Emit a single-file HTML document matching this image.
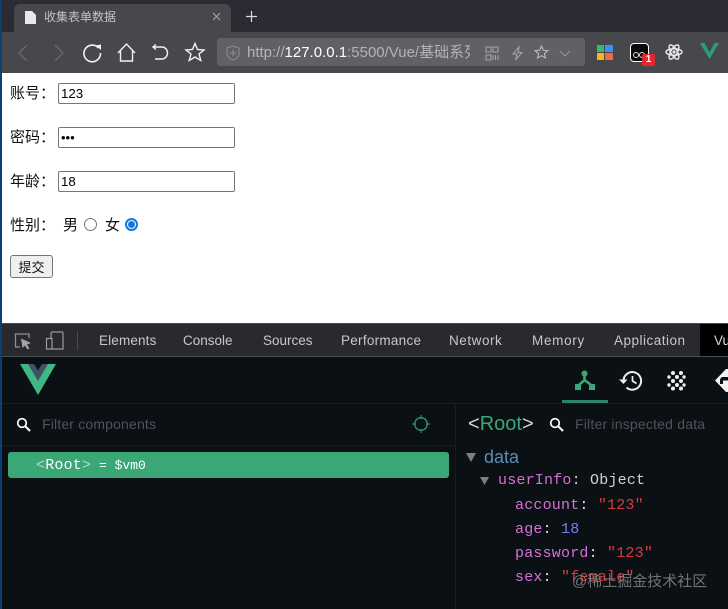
<!DOCTYPE html>
<html><head><meta charset="utf-8"><style>
html,body{margin:0;padding:0;width:728px;height:609px;overflow:hidden;background:#fff}
body{position:relative;font-family:"Liberation Sans","Noto Sans CJK SC",sans-serif}
.a{position:absolute;white-space:nowrap}
.cn{font-size:15px;color:#111;line-height:20px}
.inp{position:absolute;left:58px;width:175px;height:19px;border:1px solid #767676;border-radius:2px;background:#fff;font-size:13.3px;line-height:19px;color:#000;text-indent:2px}
.tab{position:absolute;top:332px;font-size:13.5px;line-height:18px;color:#c6c8cb;white-space:nowrap}
.m{position:absolute;white-space:nowrap;font-family:"Liberation Mono",monospace;font-size:15px;line-height:20px;letter-spacing:.2px}
.k{color:#d670d6}.s{color:#d93a3a}
svg{position:absolute;overflow:visible}
</style></head><body>
<div class="a" style="left:0;top:0;width:728px;height:32px;background:#2a2b33"></div>
<div class="a" style="left:14px;top:4px;width:217px;height:28px;background:#47484c;border-radius:6px 6px 0 0"></div>
<div class="a" style="left:0;top:32px;width:728px;height:41px;background:#47484c"></div>
<div class="a" style="left:0;top:0;width:2px;height:609px;background:#0d3f70"></div>
<svg style="left:25px;top:11px" width="12" height="13"><path d="M0 0H7L11 4V13H0Z" fill="#e8e8e8"/></svg>
<div class="a" style="left:44px;top:9px;font-size:12px;line-height:17px;color:#c4c4c6">收集表单数据</div>
<svg style="left:212px;top:12px" width="9" height="9"><path d="M1 1L8 8M8 1L1 8" stroke="#aaa" fill="none"/></svg>
<svg style="left:245px;top:10px" width="13" height="13"><path d="M6.5 1V12M1 6.5H12" stroke="#ddd" fill="none" stroke-width="1.2"/></svg>
<svg style="left:18px;top:44px" width="10" height="18"><path d="M9 1L1 9L9 17" stroke="#6e6f73" fill="none" stroke-width="1.2"/></svg>
<svg style="left:54px;top:44px" width="10" height="18"><path d="M1 1L9 9L1 17" stroke="#6e6f73" fill="none" stroke-width="1.2"/></svg>
<svg style="left:82px;top:42px" width="20" height="21"><path d="M16.5 6A8.3 8.3 0 1 0 18.5 11" stroke="#f2f2f2" fill="none" stroke-width="1.6"/><path d="M13.5 3.5L19 2.500V8Z" fill="#f2f2f2"/></svg>
<svg style="left:117px;top:43px" width="19" height="19"><path d="M1 10L9.500 1L18 10M3.500 8V18H15.500V8" stroke="#f2f2f2" fill="none" stroke-width="1.4"/></svg>
<svg style="left:152px;top:44px" width="18" height="17"><path d="M4 .5L1 3L4 5.500M1.500 3H10A5.500 6 0 0 1 10 15H3" stroke="#f2f2f2" fill="none" stroke-width="1.400"/></svg>
<svg style="left:185px;top:42px" width="20" height="20"><path d="M10 1.500L12.500 7.500L19 8L14 12L15.800 18.500L10 15L4.200 18.500L6 12L1 8L7.500 7.500Z" stroke="#f2f2f2" fill="none" stroke-width="1.4"/></svg>
<div class="a" style="left:217px;top:38px;width:368px;height:28px;background:#606164;border-radius:3px"></div>
<svg style="left:226px;top:45px" width="14" height="16"><path d="M7 1L13 3V8C13 12 10 14 7 15C4 14 1 12 1 8V3ZM7 5V11M4 8H10" stroke="#8d8e90" fill="none"/></svg>
<div class="a" style="left:247px;top:42px;width:223px;overflow:hidden;font-size:15px;line-height:21px;color:#b3b4b6">http://<span style="color:#fff">127.0.0.1</span>:5500/Vue/基础系列</div>
<svg style="left:485px;top:46px" width="14" height="15"><path d="M1 1H6V6H1ZM8 1H13V6H8ZM1 9H6V14H1ZM8 9V14M10.500 9V14M13 9V14" stroke="#a6a7a9" fill="none"/></svg>
<svg style="left:511px;top:46px" width="13" height="15"><path d="M8 1L2 8H6L4.500 14L11 6.500H7Z" stroke="#a6a7a9" fill="none"/></svg>
<svg style="left:534px;top:45px" width="15" height="14"><path d="M7.500 1L9.300 5.200L14 5.600L10.400 8.600L11.500 13L7.500 10.700L3.500 13L4.600 8.600L1 5.600L5.700 5.200Z" stroke="#c4c4c5" fill="none"/></svg>
<svg style="left:559px;top:50px" width="12" height="7"><path d="M1 1L6 6L11 1" stroke="#9a9b9d" fill="none"/></svg>
<div class="a" style="left:597px;top:45px;width:7px;height:7px;background:#36b96e"></div>
<div class="a" style="left:605px;top:45px;width:8px;height:7px;background:#3d8ff0"></div>
<div class="a" style="left:597px;top:53px;width:7px;height:7px;background:#f7b51f"></div>
<div class="a" style="left:605px;top:53px;width:8px;height:7px;background:#ee6a43"></div>
<div class="a" style="left:630px;top:43px;width:17px;height:17px;background:#0a0a0a;border:1px solid #fff;border-radius:4px"></div>
<div class="a" style="left:633px;top:52px;width:4px;height:4px;border:1px solid #ddd;border-radius:50%"></div>
<div class="a" style="left:639px;top:52px;width:4px;height:4px;border:1px solid #ddd;border-radius:50%"></div>
<div class="a" style="left:642px;top:54px;width:13px;height:12px;background:#e8262f;border-radius:2px;color:#fff;font-size:10px;font-weight:bold;line-height:12px;text-align:center">1</div>
<svg style="left:665px;top:43px" width="18" height="18" viewBox="0 0 18 18"><g fill="none" stroke="#e6e6e6" stroke-width="1.500"><ellipse cx="9" cy="9" rx="8" ry="3.200"/><ellipse cx="9" cy="9" rx="8" ry="3.200" transform="rotate(60 9 9)"/><ellipse cx="9" cy="9" rx="8" ry="3.200" transform="rotate(120 9 9)"/></g><circle cx="9" cy="9" r="1.600" fill="#e6e6e6"/></svg>
<svg style="left:700px;top:43px" width="19" height="16"><path d="M0 0H4.500L9.500 9.500L14.500 0H19L9.500 16Z" fill="#2e9d7e"/></svg>

<div class="a cn" style="left:10px;top:84px">账号：</div>
<div class="inp" style="top:83px">123</div>
<div class="a cn" style="left:10px;top:128px">密码：</div>
<div class="inp" style="top:127px;font-size:13px;letter-spacing:0">•••</div>
<div class="a cn" style="left:10px;top:172px">年龄：</div>
<div class="inp" style="top:171px">18</div>
<div class="a cn" style="left:10px;top:216px">性别：</div>
<div class="a cn" style="left:63px;top:216px">男</div>
<div class="a" style="left:84px;top:218px;width:11px;height:11px;border:1px solid #767676;border-radius:50%;background:#fff"></div>
<div class="a cn" style="left:105px;top:216px">女</div>
<div class="a" style="left:125px;top:218px;width:9px;height:9px;border:2px solid #0f7ae5;border-radius:50%;background:#fff"></div>
<div class="a" style="left:128px;top:221px;width:7px;height:7px;border-radius:50%;background:#0f7ae5"></div>
<div class="a" style="left:10px;top:255px;width:41px;height:21px;border:1px solid #767676;border-radius:3px;background:#efefef;font-size:13px;line-height:24px;text-align:center;color:#111">提交</div>

<div class="a" style="left:2px;top:323px;width:726px;height:34px;background:#292a2d;border-top:1px solid #494c50;box-sizing:border-box"></div>
<div class="a" style="left:2px;top:356px;width:726px;height:1px;background:#494c50"></div>
<svg style="left:14px;top:332px" width="18" height="18"><path d="M6 15H1.500V2H15V6" stroke="#8f9092" fill="none" stroke-width="1.300"/><path d="M7 6.500L17 11L13 12.500L15.500 16.500L13.500 17.500L11 13.500L8.500 16Z" fill="#a3a4a6"/></svg>
<svg style="left:45px;top:331px" width="19" height="19"><path d="M6 7V2.500Q6 1 7.500 1H17Q18 1 18 2.500V18H1.500V7.500H7V18" stroke="#9a9b9d" fill="none" stroke-width="1.200"/></svg>
<div class="a" style="left:77px;top:331px;width:1px;height:19px;background:#4a4b4e"></div>
<div class="tab" style="left:99px;letter-spacing:.15px">Elements</div>
<div class="tab" style="left:183px">Console</div>
<div class="tab" style="left:263px">Sources</div>
<div class="tab" style="left:341px;letter-spacing:.27px">Performance</div>
<div class="tab" style="left:449px;letter-spacing:.55px">Network</div>
<div class="tab" style="left:532px;letter-spacing:.7px">Memory</div>
<div class="tab" style="left:614px;letter-spacing:.5px">Application</div>
<div class="a" style="left:700px;top:324px;width:28px;height:32px;background:#000"></div>
<div class="tab" style="left:714px;color:#d8d8d8;width:14px;overflow:hidden">Vue</div>

<div class="a" style="left:2px;top:357px;width:726px;height:252px;background:#0b1015"></div>
<div class="a" style="left:2px;top:403px;width:726px;height:1px;background:#171c21"></div>
<div class="a" style="left:2px;top:445px;width:453px;height:1px;background:#171c21"></div>
<div class="a" style="left:455px;top:403px;width:1px;height:206px;background:#171c21"></div>
<svg style="left:20px;top:364px" width="36" height="31"><path d="M0 0H36L18 31Z" fill="#41b883"/><path d="M8 0H28L18 17Z" fill="#3f5266"/><path d="M14 0H22L18 6.500Z" fill="#0b1015"/></svg>
<svg style="left:575px;top:370px" width="20" height="20" viewBox="0 0 20 20"><circle cx="9.500" cy="3.500" r="3" fill="#3ba776"/><rect x="0" y="14" width="6" height="6" fill="#3ba776"/><rect x="14" y="14" width="6" height="6" fill="#3ba776"/><path d="M9.500 5V10L4 15M9.500 10L16 15" stroke="#3ba776" stroke-width="2.600" fill="none"/></svg>
<div class="a" style="left:562px;top:400px;width:46px;height:3px;background:#2d8367"></div>
<svg style="left:619px;top:370px" width="24" height="21" viewBox="0 0 24 21"><path d="M4.500 10.500A8.800 8.800 0 1 1 7.500 17.500" stroke="#eee" stroke-width="2" fill="none"/><path d="M0 9.500H8.500L4.500 14Z" fill="#eee"/><path d="M13.500 6V11L17.500 13.500" stroke="#eee" stroke-width="1.700" fill="none"/></svg>
<svg style="left:667px;top:371px" width="19" height="19" fill="#eee"><circle cx="6" cy="2" r="2"/><circle cx="14" cy="2" r="2"/><circle cx="2" cy="6" r="1.700"/><circle cx="10" cy="6" r="2"/><circle cx="17" cy="6" r="1.700"/><circle cx="6" cy="10" r="2"/><circle cx="14" cy="10" r="2"/><circle cx="2" cy="14" r="1.700"/><circle cx="10" cy="14" r="2"/><circle cx="17" cy="14" r="1.700"/><circle cx="6" cy="17.500" r="2"/><circle cx="14" cy="17.500" r="2"/></svg>
<svg style="left:715px;top:369px" width="13" height="23"><path d="M11 0L0 11.500L11 23H13V0Z" fill="#f2f2f2"/><path d="M13 8H8Q5 8 5 12V15H8V11.500H13Z" fill="#0b1015"/></svg>

<svg style="left:16px;top:417px" width="15" height="15"><circle cx="6" cy="6" r="4.300" stroke="#fff" stroke-width="1.700" fill="none"/><path d="M9 9L14 14" stroke="#fff" stroke-width="2"/></svg>
<div class="a" style="left:42px;top:415px;font-size:14px;line-height:18px;letter-spacing:.17px;color:#50545a">Filter components</div>
<svg style="left:412px;top:415px" width="18" height="18"><circle cx="9" cy="9" r="6.300" stroke="#2f8a6b" stroke-width="1.500" fill="none"/><path d="M9 0V4M9 14V18M0 9H4M14 9H18" stroke="#2f8a6b" stroke-width="1.300"/></svg>
<div class="a" style="left:8px;top:452px;width:441px;height:26px;background:#3ba776;border-radius:3px"></div>
<div class="m" style="left:36px;top:456px;font-size:15px;color:#fff"><span style="color:#b6dcc8">&lt;</span>Root<span style="color:#b6dcc8">&gt;</span><span style="font-size:13px;letter-spacing:0"> = $vm0</span></div>

<div class="a" style="left:468px;top:412px;font-size:20px;line-height:24px;color:#d6d6d6">&lt;<span style="color:#3ba776">Root</span>&gt;</div>
<svg style="left:549px;top:417px" width="15" height="15"><circle cx="6" cy="6" r="4.300" stroke="#fff" stroke-width="1.700" fill="none"/><path d="M9 9L14 14" stroke="#fff" stroke-width="2"/></svg>
<div class="a" style="left:575px;top:415px;font-size:14px;line-height:18px;letter-spacing:.2px;color:#50545a">Filter inspected data</div>

<svg style="left:466px;top:453px" width="10" height="9"><path d="M0 0H10L5 9Z" fill="#7c7f82"/></svg>
<div class="a" style="left:484px;top:446px;font-size:18px;line-height:22px;color:#5d8cb3">data</div>
<svg style="left:480px;top:477px" width="9" height="8"><path d="M0 0H9L4.500 8Z" fill="#7c7f82"/></svg>
<div class="m" style="left:498px;top:471px;color:#cdd5d0"><span class="k">userInfo</span>: Object</div>
<div class="m" style="left:515px;top:496px;color:#ddd"><span class="k">account</span>: <span class="s">"123"</span></div>
<div class="m" style="left:515px;top:520px;color:#ddd"><span class="k">age</span>: <span style="color:#7a7ff0">18</span></div>
<div class="m" style="left:515px;top:544px;color:#ddd"><span class="k">password</span>: <span class="s">"123"</span></div>
<div class="m" style="left:515px;top:568px;color:#ddd"><span class="k">sex</span>: <span class="s">"female"</span></div>
<div class="a" style="left:572px;top:572px;font-size:15px;line-height:20px;color:#8b8e90;opacity:.8">@稀土掘金技术社区</div>
</body></html>
